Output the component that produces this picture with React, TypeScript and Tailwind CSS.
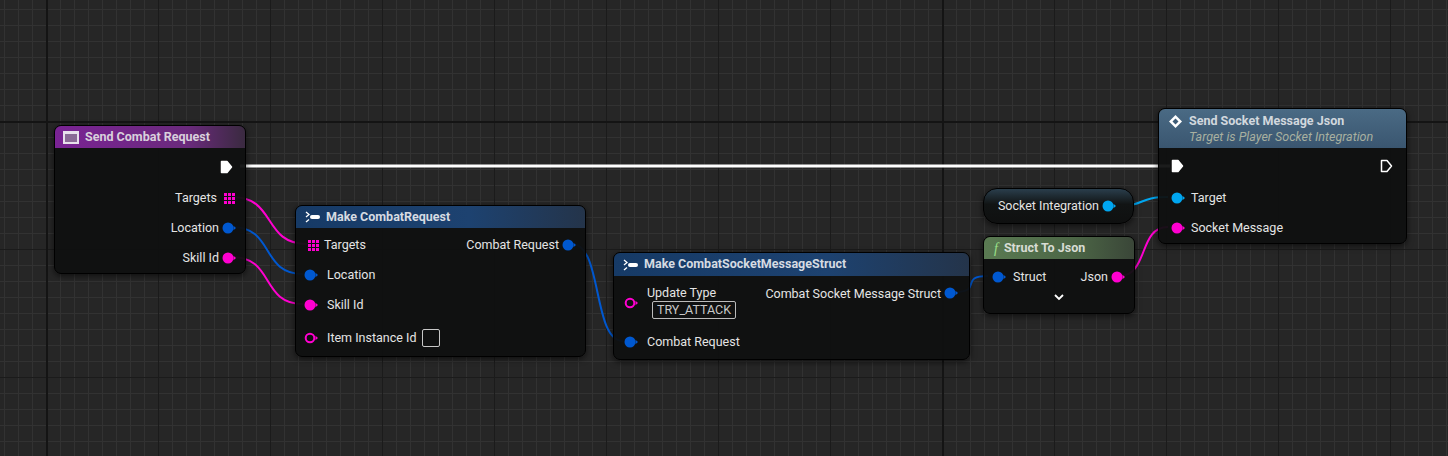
import React from "react";

const PINK = "#ff00d0";
const BLUE = "#0058d0";
const LBLUE = "#00a6f0";

function Pin({ color, hollow = false }: { color: string; hollow?: boolean }) {
  return (
    <svg width="15" height="12" viewBox="0 0 15 12" className="shrink-0">
      {hollow ? (
        <circle cx="6" cy="6" r="4.3" fill="#111" stroke={color} strokeWidth="2" />
      ) : (
        <circle cx="6" cy="6" r="5.5" fill={color} />
      )}
      <path d="M11.5 3.8 L14 6 L11.5 8.2 Z" fill={color} />
    </svg>
  );
}

function ArrayPin() {
  const sq = [];
  for (let r = 0; r < 3; r++)
    for (let c = 0; c < 3; c++) sq.push(<rect key={r * 3 + c} x={c * 4} y={r * 4} width="3" height="3" fill={PINK} />);
  return (
    <svg width="11" height="11" viewBox="0 0 11 11" className="shrink-0">
      {sq}
    </svg>
  );
}

function Exec({ hollow = false }: { hollow?: boolean }) {
  return (
    <svg width="13" height="14" viewBox="0 0 13 14">
      <path
        d="M1.5 1.5 H7 L11.5 7 L7 12.5 H1.5 Z"
        fill={hollow ? "none" : "#fff"}
        stroke="#fff"
        strokeWidth="1.5"
        strokeLinejoin="round"
      />
    </svg>
  );
}

function StructIcon() {
  return (
    <svg width="16" height="12" viewBox="0 0 16 12">
      <path d="M1 1 L4 3.5 L1 6" fill="none" stroke="#fff" strokeWidth="1.3" />
      <path d="M1 11 L4 8.5" fill="none" stroke="#fff" strokeWidth="1.3" />
      <rect x="5" y="4" width="10" height="4" rx="2" fill="#fff" />
    </svg>
  );
}

function wire(x1: number, y1: number, x2: number, y2: number) {
  const d = Math.max(Math.abs(x2 - x1) * 0.6, 30);
  return `M${x1} ${y1} C${x1 + d} ${y1} ${x2 - d} ${y2} ${x2} ${y2}`;
}

const nodeBody =
  "absolute rounded-[7px] border border-black bg-[#0f1010]/95 shadow-[0_2px_6px_rgba(0,0,0,0.6)] overflow-hidden text-[12.5px] text-[#e4e4e4]";

export default function App() {
  return (
    <div
      className="relative w-[1448px] h-[456px] overflow-hidden bg-[#262626]"
      style={{
        fontFamily: "Roboto, 'Liberation Sans', sans-serif",
        backgroundImage:
          "linear-gradient(to right, #141414 0 2px, transparent 2px), linear-gradient(to bottom, #141414 0 2px, transparent 2px), linear-gradient(to right, #1b1b1b 0 1px, transparent 1px), linear-gradient(to bottom, #1b1b1b 0 1px, transparent 1px), linear-gradient(to right, #323232 0 1px, transparent 1px), linear-gradient(to bottom, #323232 0 1px, transparent 1px)",
        backgroundSize:
          "896px 100%, 100% 1024px, 112px 100%, 100% 128px, 14px 100%, 100% 16px",
        backgroundPosition:
          "46px 0, 0 121px, 46px 0, 0 121px, 4px 0, 0 9px",
      }}
    >
      {/* wires */}
      <svg className="absolute inset-0" width="1448" height="456">
        <line x1="240" y1="166" x2="1170" y2="166" stroke="#fff" strokeWidth="3" />
        <path d={wire(232, 197, 307, 244)} stroke={PINK} strokeWidth="2" fill="none" />
        <path d={wire(232, 227, 303, 274)} stroke={BLUE} strokeWidth="2" fill="none" />
        <path d={wire(232, 257, 303, 304)} stroke={PINK} strokeWidth="2" fill="none" />
        <path d={wire(572, 244, 623, 341)} stroke={BLUE} strokeWidth="2" fill="none" />
        <path d={wire(954, 292, 988, 276)} stroke={BLUE} strokeWidth="2" fill="none" />
        <path d={wire(1116, 206, 1168, 197)} stroke={LBLUE} strokeWidth="2" fill="none" />
        <path d={wire(1119, 276, 1168, 227)} stroke={PINK} strokeWidth="2" fill="none" />
      </svg>

      {/* Send Combat Request */}
      <div className={nodeBody} style={{ left: 54, top: 125, width: 192, height: 149 }}>
        <div className="h-[22px] flex items-center gap-[6px] px-[8px] bg-[linear-gradient(to_right,#7a2394,#6a2a7c_70%,#3a2a40)] font-bold text-[#d9d0dc]">
          <span className="inline-block w-[16px] h-[13px] bg-[#8a6a96] border-[2px] border-[#e8e0ec] border-t-[3px]" />
          Send Combat Request
        </div>
        <div className="flex justify-end pr-[12px] pt-[12px]">
          <Exec />
        </div>
        <div className="flex flex-col items-end gap-[12px] pr-[8px] pt-[15px]">
          <div className="flex items-center gap-[5px] h-[18px]">Targets<span className="w-[15px] flex justify-center"><ArrayPin /></span></div>
          <div className="flex items-center gap-[3px] h-[18px]">Location<Pin color={BLUE} /></div>
          <div className="flex items-center gap-[3px] h-[18px]">Skill Id<Pin color={PINK} /></div>
        </div>
      </div>

      {/* Make CombatRequest */}
      <div className={nodeBody} style={{ left: 295, top: 205, width: 291, height: 152 }}>
        <div className="h-[22px] flex items-center gap-[5px] px-[9px] bg-[linear-gradient(to_right,#163a66,#1d4270_60%,#24344a)] font-bold text-[#d6dbe2]">
          <StructIcon />
          Make CombatRequest
        </div>
        <div className="relative px-[8px] pt-[8px] flex flex-col gap-[12px]">
          <div className="flex items-center h-[18px] justify-between">
            <div className="flex items-center gap-[5px] pl-[4px]"><ArrayPin />Targets</div>
            <div className="flex items-center gap-[3px]">Combat Request<Pin color={BLUE} /></div>
          </div>
          <div className="flex items-center gap-[8px] h-[18px]"><Pin color={BLUE} />Location</div>
          <div className="flex items-center gap-[8px] h-[18px]"><Pin color={PINK} />Skill Id</div>
          <div className="flex items-center gap-[8px] h-[22px] mt-[1px]">
            <Pin color={PINK} hollow />Item Instance Id
            <span className="inline-block w-[18px] h-[18px] rounded-[2px] border border-[#c8c8c8] ml-[-2px]" />
          </div>
        </div>
      </div>

      {/* Make CombatSocketMessageStruct */}
      <div className={nodeBody} style={{ left: 613, top: 252, width: 357, height: 108 }}>
        <div className="h-[23px] flex items-center gap-[5px] px-[9px] bg-[linear-gradient(to_right,#163a66,#1d4270_60%,#24344a)] font-bold text-[#d6dbe2]">
          <StructIcon />
          Make CombatSocketMessageStruct
        </div>
        <div className="flex justify-between px-[10px] pt-[10px]">
          <div className="flex items-center gap-[8px]">
            <Pin color={PINK} hollow />
            <div className="flex flex-col leading-[14px]">
              <span>Update Type</span>
              <span className="mt-[1px] ml-[5px] inline-block border border-[#bbb] rounded-[2px] px-[4px] text-[#c8c8c8] leading-[16px]">TRY_ATTACK</span>
            </div>
          </div>
          <div className="flex items-start gap-[3px] pt-[1px]">
            <span className="leading-[14px]">Combat Socket Message Struct</span>
            <Pin color={BLUE} />
          </div>
        </div>
        <div className="flex items-center gap-[8px] px-[10px] mt-[14px]"><Pin color={BLUE} />Combat Request</div>
      </div>

      {/* Socket Integration */}
      <div
        className="absolute rounded-[14px] border border-black bg-[linear-gradient(to_bottom,#2a3e4c,#111414_45%,#0f1010)] shadow-[0_2px_6px_rgba(0,0,0,0.6)] flex items-center justify-end gap-[3px] pr-[16px] text-[12.5px] text-[#e4e4e4]"
        style={{ left: 983, top: 188, width: 151, height: 36 }}
      >
        Socket Integration<Pin color={LBLUE} />
      </div>

      {/* Struct To Json */}
      <div className={nodeBody} style={{ left: 983, top: 236, width: 152, height: 78 }}>
        <div className="h-[22px] flex items-center gap-[6px] px-[10px] bg-[linear-gradient(to_right,#5a7a52,#4c6646_60%,#3a4638)] font-bold text-[#d8dcd4]">
          <span className="italic font-normal text-[#9be08a] text-[14px]" style={{ fontFamily: "'Liberation Serif', serif" }}>f</span>
          Struct To Json
        </div>
        <div className="flex justify-between items-center px-[8px] pt-[9px]">
          <div className="flex items-center gap-[6px]"><Pin color={BLUE} />Struct</div>
          <div className="flex items-center gap-[3px]">Json<Pin color={PINK} /></div>
        </div>
        <div className="flex justify-center pt-[6px]">
          <svg width="12" height="8" viewBox="0 0 12 8"><path d="M2 2 L6 6 L10 2" stroke="#fff" strokeWidth="1.8" fill="none" /></svg>
        </div>
      </div>

      {/* Send Socket Message Json */}
      <div className={nodeBody} style={{ left: 1158, top: 108, width: 249, height: 136 }}>
        <div className="h-[39px] flex items-start gap-[6px] px-[9px] pt-[4px] bg-[linear-gradient(to_bottom,#4a6a84,#3a5670)]">
          <svg width="15" height="15" viewBox="0 0 15 15" className="mt-[1px] shrink-0">
            <path d="M7.5 1 L14 7.5 L7.5 14 L1 7.5 Z" fill="#fff" />
            <path d="M7.5 4.5 L10.5 7.5 L7.5 10.5 L4.5 7.5 Z" fill="#3e5c76" />
          </svg>
          <div className="flex flex-col leading-[16px]">
            <span className="font-bold text-[#d2d8de]">Send Socket Message Json</span>
            <span className="italic text-[#a8b0a0]">Target is Player Socket Integration</span>
          </div>
        </div>
        <div className="flex justify-between items-center pl-[12px] pr-[13px] pt-[11px]">
          <Exec />
          <Exec hollow />
        </div>
        <div className="flex flex-col gap-[12px] px-[12px] pt-[16px]">
          <div className="flex items-center gap-[5px] h-[18px]"><Pin color={LBLUE} />Target</div>
          <div className="flex items-center gap-[5px] h-[18px]"><Pin color={PINK} />Socket Message</div>
        </div>
      </div>
    </div>
  );
}
